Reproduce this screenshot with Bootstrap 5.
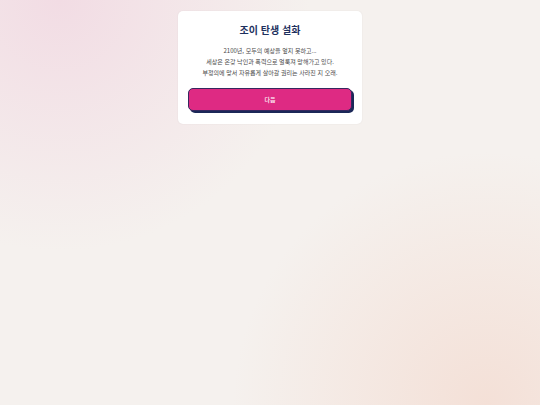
<!DOCTYPE html>
<html lang="ko">
<head>
<meta charset="utf-8">
<meta name="viewport" content="width=device-width, initial-scale=1">
<title>조이 탄생 설화</title>
<link rel="stylesheet" href="https://cdn.jsdelivr.net/npm/bootstrap@5.3.0/dist/css/bootstrap.min.css">
<style>
body {
  font-family: "Noto Sans CJK KR", sans-serif;
  background:
    radial-gradient(circle at 11% 0%, #f2dce4, #f2dce400 40%),
    radial-gradient(circle at 90% 100%, #f4e0d7, #f4e0d700 40%),
    #f5f1ee;
}
.story-page {
  padding-top: 11px;
}
.story-card {
  width: 100%;
  max-width: 184px;
  padding: 11px 10px 13px;
  border-radius: 5px;
  box-shadow: 0 0 2px #00000012;
}
.story-title {
  margin-bottom: 7px;
  font-size: 10px;
  line-height: 16px;
  color: #1e315e;
}
.story-text {
  margin-bottom: 10px;
  font-size: 6px;
  line-height: 11px;
  color: #484848;
}
.btn-next {
  --bs-btn-color: #fff;
  --bs-btn-bg: #de2a83;
  --bs-btn-border-color: #35285f;
  --bs-btn-hover-color: #fff;
  --bs-btn-hover-bg: #c92376;
  --bs-btn-hover-border-color: #35285f;
  --bs-btn-active-bg: #b51e69;
  --bs-btn-active-color: #fff;
  --bs-btn-border-radius: 5px;
  --bs-btn-font-size: 6px;
  --bs-btn-line-height: 13px;
  --bs-btn-font-weight: 500;
  box-shadow: 2px 2px 0 #1b2858;
}
</style>
</head>
<body class="min-vh-100">
<main class="story-page container-fluid d-flex justify-content-center">
  <section class="story-card bg-white text-center">
    <h1 class="story-title fw-bold">조이 탄생 설화</h1>
    <p class="story-text text-nowrap">2100년, 모두의 예상을 엎지 못하고...<br>세상은 온갖 낙인과 폭력으로 얼룩져 망해가고 있다.<br>부정의에 맞서 자유롭게 살아갈 권리는 사라진 지 오래.</p>
    <button type="button" class="btn btn-next d-block w-100 py-1">다음</button>
  </section>
</main>
<script src="https://cdn.jsdelivr.net/npm/bootstrap@5.3.0/dist/js/bootstrap.bundle.min.js"></script>
</body>
</html>
